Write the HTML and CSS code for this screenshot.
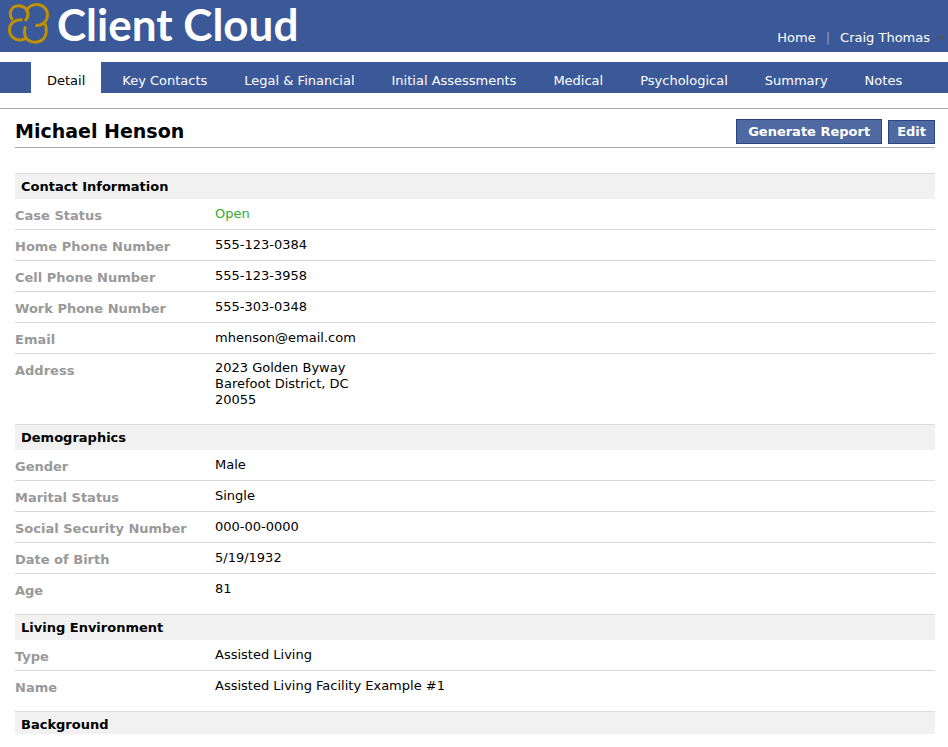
FILE: index.html
```html
<!DOCTYPE html>
<html lang="en">
<head>
<meta charset="utf-8">
<title>Client Cloud</title>
<link rel="stylesheet" href="styles.css">
</head>
<body>
<header class="banner">
  <div class="brand">
    <svg class="brand-mark" viewBox="0 0 44 44" aria-hidden="true">
      <path d="M5.500 18C2 14 3 8.500 5.500 6C8.500 3 14 3 17.500 5.500C22 9 22 15 18 19"/>
      <path d="M20 8.500C21 4.500 25.500 2.500 30 2.500C36 2.600 40.500 7 40.500 12.500C40.500 19.500 35.500 23.500 28.500 23.500"/>
      <path d="M15.500 18C8 16.500 2.500 21.500 2.500 28C2.500 34.500 8.500 39 15 37.800L18.500 36.500"/>
      <path d="M18.500 24.500C15.500 33 19.500 40.200 28 40.200C37.500 40.200 41.500 32 38 21.500"/>
    </svg>
    <span class="brand-name">Client Cloud</span>
  </div>
  <div class="account">
    <a href="#">Home</a>
    <span class="divider">|</span>
    <a href="#">Craig Thomas</a>
    <svg class="caret" viewBox="0 0 8 4" aria-hidden="true"><path d="M0 0H8L4 4Z"/></svg>
  </div>
</header>
<nav class="tabs">
  <a class="tab active" href="#">Detail</a>
  <a class="tab" href="#">Key Contacts</a>
  <a class="tab" href="#">Legal &amp; Financial</a>
  <a class="tab" href="#">Initial Assessments</a>
  <a class="tab" href="#">Medical</a>
  <a class="tab" href="#">Psychological</a>
  <a class="tab" href="#">Summary</a>
  <a class="tab" href="#">Notes</a>
</nav>
<main class="content">
  <div class="title-bar">
    <h1>Michael Henson</h1>
    <div class="actions">
      <button class="button large" type="button">Generate Report</button>
      <button class="button" type="button">Edit</button>
    </div>
  </div>
  <section>
    <h2>Contact Information</h2>
    <dl>
      <div class="row"><dt>Case Status</dt><dd class="open">Open</dd></div>
      <div class="row"><dt>Home Phone Number</dt><dd>555-123-0384</dd></div>
      <div class="row"><dt>Cell Phone Number</dt><dd>555-123-3958</dd></div>
      <div class="row"><dt>Work Phone Number</dt><dd>555-303-0348</dd></div>
      <div class="row"><dt>Email</dt><dd>mhenson@email.com</dd></div>
      <div class="row"><dt>Address</dt><dd class="multiline">2023 Golden Byway<br>Barefoot District, DC<br>20055</dd></div>
    </dl>
  </section>
  <section>
    <h2>Demographics</h2>
    <dl>
      <div class="row"><dt>Gender</dt><dd>Male</dd></div>
      <div class="row"><dt>Marital Status</dt><dd>Single</dd></div>
      <div class="row"><dt>Social Security Number</dt><dd>000-00-0000</dd></div>
      <div class="row"><dt>Date of Birth</dt><dd>5/19/1932</dd></div>
      <div class="row"><dt>Age</dt><dd>81</dd></div>
    </dl>
  </section>
  <section>
    <h2>Living Environment</h2>
    <dl>
      <div class="row"><dt>Type</dt><dd>Assisted Living</dd></div>
      <div class="row"><dt>Name</dt><dd>Assisted Living Facility Example #1</dd></div>
    </dl>
  </section>
  <section class="closing">
    <h2>Background</h2>
  </section>
</main>
</body>
</html>
```
FILE: styles.css
```css
* { box-sizing: border-box; }

body {
  margin: 0;
  background: #fff;
  color: #000;
  font: 13px/16px Verdana, "DejaVu Sans", sans-serif;
}

a { color: inherit; text-decoration: none; }

.banner {
  display: flex;
  justify-content: space-between;
  align-items: flex-end;
  height: 52px;
  padding: 0 3px 6px 7px;
  background: #3b5998;
  color: #fff;
}

.brand {
  display: flex;
  align-items: center;
  gap: 6px;
}

.brand-mark {
  width: 44px;
  height: 44px;
  fill: none;
  stroke: #bf9000;
  stroke-width: 3;
}

.brand-name {
  font: bold 44px/44px Lato, sans-serif;
}

.account {
  display: flex;
  align-items: center;
  gap: 10px;
}

.divider { color: #8b9dc3; }

.caret {
  width: 8px;
  height: 4px;
  margin-left: -3px;
  fill: #555;
}

.tabs {
  display: flex;
  gap: 5px;
  margin-top: 10px;
  padding-left: 31px;
  background: #3b5998;
  color: #fff;
  white-space: nowrap;
}

.tab { padding: 11px 16px 4px; }

.tab.active { background: #fff; color: #000; }

.content {
  margin-top: 15px;
  padding: 9px 13px 13px 15px;
  border-top: 1px solid #aaa;
}

.title-bar {
  display: flex;
  justify-content: space-between;
  align-items: flex-end;
  margin-bottom: 25px;
  padding-bottom: 3px;
  border-bottom: 1px solid #aaa;
}

h1 {
  margin: 0;
  font-size: 19px;
  line-height: 26px;
}

.actions {
  display: flex;
  align-items: flex-end;
  gap: 6px;
}

.button {
  height: 24px;
  padding: 0 8px;
  border: 1px solid #29447e;
  background: #4f6aa3;
  color: #fff;
  font: bold 13px/20px Verdana, "DejaVu Sans", sans-serif;
}

.button.large { height: 25px; padding: 0 11px; }

h2 {
  margin: 0;
  padding: 5px 6px 4px;
  border-top: 1px solid #ddd;
  background: #f1f1f1;
  font-size: 13px;
  line-height: 16px;
}

dl { margin: 0 0 10px; }

.row {
  display: grid;
  grid-template-columns: 200px 1fr;
  min-height: 31px;
  border-bottom: 1px solid #d8d8d8;
}

.row:last-child {
  min-height: 30px;
  border-bottom: 0;
}

dt {
  padding-top: 9px;
  color: #999;
  font-weight: bold;
}

dd {
  margin: 0;
  padding: 7px 0;
}

dd.multiline { padding: 6px 0; }

.open { color: #33aa33; }

.closing h2 { padding-bottom: 1px; }
```
